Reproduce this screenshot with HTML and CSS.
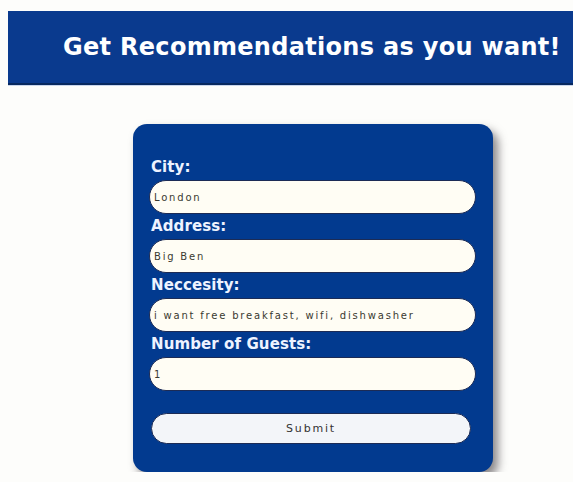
FILE: index.html
```html
<!DOCTYPE html>
<html lang="en">
<head>
<meta charset="utf-8">
<title>Get Recommendations</title>
<link rel="stylesheet" href="styles.css">
</head>
<body>
  <header class="topbar">
    <h1 class="topbar-title">Get Recommendations as you want!</h1>
  </header>

  <main class="page">
    <form class="card">
      <label class="field-label" for="city">City:</label>
      <input class="field-input" id="city" type="text" value="London">

      <label class="field-label" for="address">Address:</label>
      <input class="field-input" id="address" type="text" value="Big Ben">

      <label class="field-label" for="need">Neccesity:</label>
      <input class="field-input" id="need" type="text" value="i want free breakfast, wifi, dishwasher">

      <label class="field-label" for="guests">Number of Guests:</label>
      <input class="field-input" id="guests" type="text" value="1">

      <button class="submit-btn" type="button">Submit</button>
    </form>
  </main>
</body>
</html>
```

FILE: styles.css
```css
* {
  box-sizing: border-box;
}

body {
  margin: 0;
  background: #fdfdfb;
  font-family: "DejaVu Sans", "Open Sans", sans-serif;
}

/* top banner */
.topbar {
  margin: 11px 0 0 8px;
  height: 74px;
  background: #0a3a8e;
  border-bottom: 2px solid #07285f;
  box-shadow: 0 1px 0 #c9d6ec;
  display: flex;
  align-items: center;
  padding-left: 55px;
}

.topbar-title {
  margin: 0;
  color: #ffffff;
  font-size: 24px;
  font-weight: 700;
  letter-spacing: 0.3px;
  white-space: nowrap;
}

/* form card */
.page {
  padding: 39px 0 0 133px;
}

.card {
  width: 360px;
  height: 348px;
  background: #023a8f;
  border-radius: 14px;
  box-shadow: 5px 6px 10px rgba(60, 55, 60, 0.6);
  padding: 31px 17px 0 16px;
  display: flex;
  flex-direction: column;
}

.field-label {
  display: block;
  height: 25px;
  line-height: 25px;
  padding-left: 2px;
  color: #eef3ff;
  font-size: 15px;
  font-weight: 700;
  letter-spacing: 0.1px;
}

.field-input {
  display: block;
  width: 100%;
  height: 34px;
  border: 1px solid #1c2b55;
  border-radius: 17px;
  background: #fffdf4;
  padding: 0 4px;
  font-family: "DejaVu Sans", sans-serif;
  font-size: 10px;
  letter-spacing: 1.8px;
  color: #3a3a30;
  outline: none;
}

.submit-btn {
  margin-top: 22px;
  margin-left: 2px;
  width: 320px;
  height: 31px;
  border: 1px solid #1c2b55;
  border-radius: 16px;
  background: #f3f5f9;
  font-family: "DejaVu Sans", sans-serif;
  font-size: 11px;
  color: #333;
  letter-spacing: 1.8px;
}
```
